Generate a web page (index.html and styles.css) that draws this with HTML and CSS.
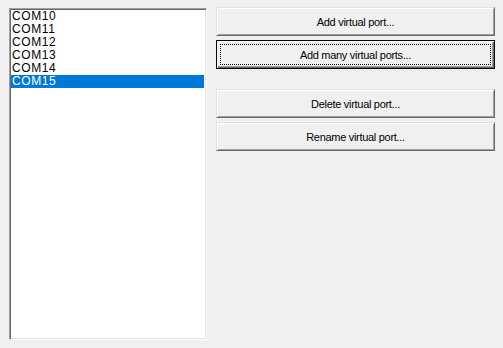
FILE: index.html
```html
<!DOCTYPE html>
<html lang="en">

<head>
  <meta charset="UTF-8" />
  <title>Virtual ports</title>
  <link rel="stylesheet" href="styles.css">
</head>

<body>
  <div class="window">
    <ul class="port-list">
      <li>COM10</li>
      <li>COM11</li>
      <li>COM12</li>
      <li>COM13</li>
      <li>COM14</li>
      <li class="selected">COM15</li>
    </ul>

    <div class="actions">
      <button class="btn">Add virtual port...</button>
      <button class="btn default">Add many virtual ports...</button>
      <button class="btn spaced">Delete virtual port...</button>
      <button class="btn">Rename virtual port...</button>
    </div>
  </div>
</body>

</html>
```

FILE: styles.css
```css
* {
  box-sizing: border-box;
  margin: 0;
  padding: 0;
}

body {
  background: #f0f0f0;
  font-family: 'Liberation Sans', Arial, sans-serif;
  color: #000;
  width: 503px;
  height: 348px;
  overflow: hidden;
}

.window {
  display: flex;
  gap: 9px;
  padding: 8px 8px 8px 9px;
}

/* sunken list box */
.port-list {
  list-style: none;
  width: 198px;
  height: 332px;
  background: #fff;
  border: 1px solid;
  border-color: #a0a0a0 #fff #fff #a0a0a0;
  box-shadow: inset 1px 1px #696969, inset -1px -1px #e3e3e3;
  padding: 1px 2px 2px 1px;
  font-size: 12px;
  line-height: 13px;
  letter-spacing: 0.6px;
}

.port-list li {
  padding-left: 1px;
  height: 13px;
}

.port-list li.selected {
  background: #0078d7;
  color: #fff;
}

.actions {
  width: 279px;
  display: flex;
  flex-direction: column;
  gap: 4px;
  margin-top: -1px;
}

/* raised push button */
.btn {
  position: relative;
  height: 29px;
  background: #f0f0f0;
  border: 1px solid;
  border-color: #e3e3e3 #696969 #696969 #e3e3e3;
  box-shadow: inset 1px 1px #fff, inset -1px -1px #a0a0a0;
  font-family: inherit;
  font-size: 11px;
  letter-spacing: -0.3px;
  color: #000;
  cursor: pointer;
}

.btn.default {
  border-color: #000;
  box-shadow: inset 1px 1px #fff, inset -1px -1px #696969, inset -2px -2px #a0a0a0;
}

.btn.default::after {
  content: "";
  position: absolute;
  inset: 3px;
  border: 1px dotted #000;
}

.btn.spaced {
  margin-top: 16px;
}
```
